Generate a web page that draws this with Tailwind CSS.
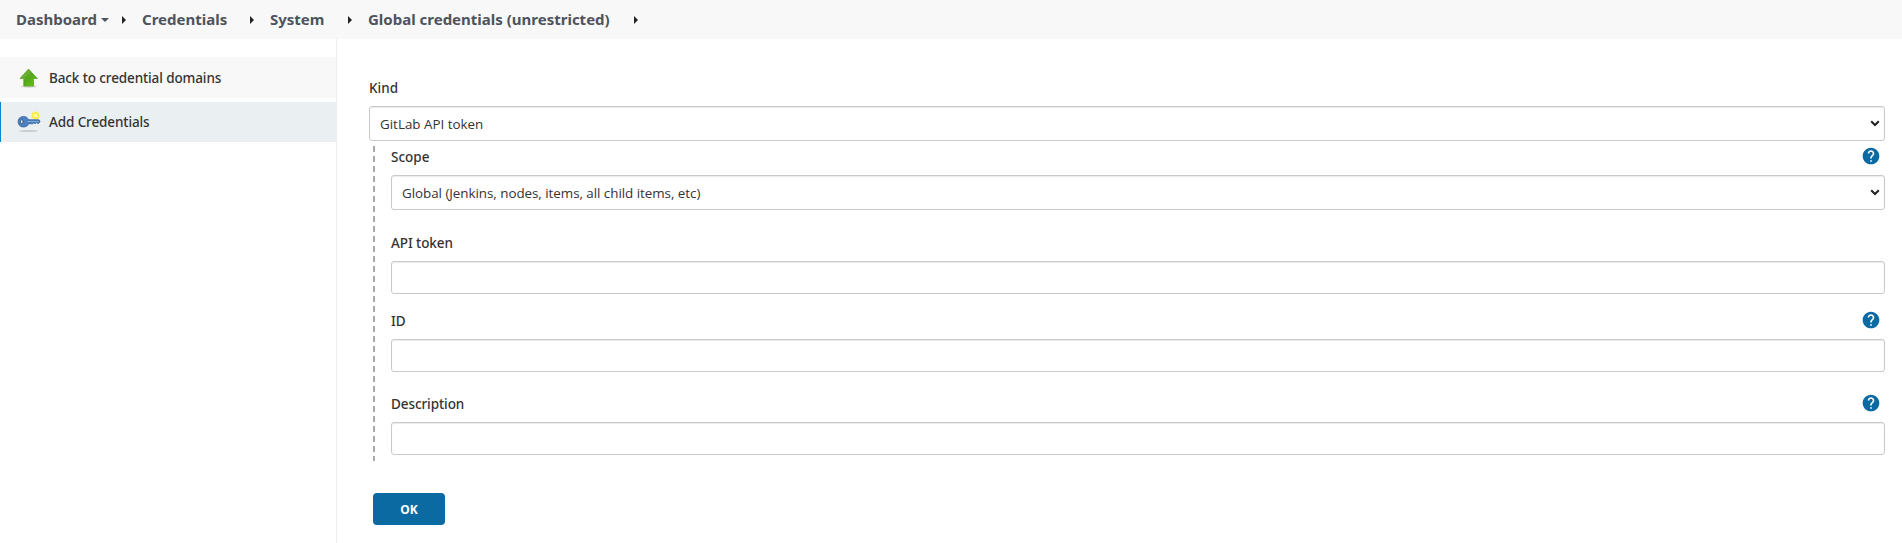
<!DOCTYPE html>
<html lang="en">
<head>
<meta charset="utf-8">
<title>Global credentials (unrestricted)</title>
<script src="https://cdn.jsdelivr.net/npm/@tailwindcss/browser@4"></script>
</head>
<body class="flex h-[543px] flex-col overflow-hidden bg-white font-['Noto_Sans',sans-serif] text-[#333]">
<svg class="hidden">
  <symbol id="caret" viewBox="0 0 4 8"><path d="M0 0L4 4L0 8Z" fill="#222"/></symbol>
  <symbol id="help" viewBox="0 0 24 24"><path fill="#0b6aa2" d="M12 2C6.48 2 2 6.48 2 12s4.480 10 10 10 10-4.480 10-10S17.520 2 12 2zm1 17h-2v-2h2v2zm2.070-7.750l-.9.920C13.450 12.900 13 13.500 13 15h-2v-.5c0-1.100.45-2.100 1.170-2.830l1.240-1.260c.37-.36.590-.86.590-1.410 0-1.100-.9-2-2-2s-2 .9-2 2H8c0-2.210 1.790-4 4-4s4 1.790 4 4c0 .88-.36 1.680-.93 2.250z"/></symbol>
  <symbol id="chevron" viewBox="0 0 10 7"><path d="M1.200 1.300L5 5L8.800 1.300" fill="none" stroke="#222" stroke-width="2"/></symbol>
</svg>

<header class="flex h-[39px] shrink-0 items-center whitespace-nowrap bg-[#f8f8f8] pl-4 text-[15px] leading-[38px] font-bold text-[#4d545d]">
  <a class="w-[85px] pb-px">Dashboard</a>
  <svg class="h-1 w-2" viewBox="0 0 8 4"><path d="M0 0H8L4 4Z" fill="#4d545d"/></svg>
  <svg class="ml-[13px] h-2 w-1"><use href="#caret"/></svg>
  <a class="ml-4 w-[108px] pb-px">Credentials</a>
  <svg class="h-2 w-1"><use href="#caret"/></svg>
  <a class="ml-4 w-[78px] pb-px">System</a>
  <svg class="h-2 w-1"><use href="#caret"/></svg>
  <a class="ml-4 w-[266px] pb-px">Global credentials (unrestricted)</a>
  <svg class="h-2 w-1"><use href="#caret"/></svg>
</header>

<div class="flex min-h-0 flex-1">
  <nav class="w-[337px] shrink-0 border-r border-[#eaeff2] pt-[18px] text-[13.5px] font-medium tracking-[-0.11px]">
    <a class="flex h-[41px] items-center bg-[#f8f8f8] pl-[17px]">
      <svg class="mr-2 h-6 w-6" viewBox="0 0 24 24">
        <defs><linearGradient id="g" x1="0" y1="0" x2="1" y2="1"><stop offset="0" stop-color="#8fbf5a"/><stop offset=".5" stop-color="#55a51c"/><stop offset="1" stop-color="#62cf0c"/></linearGradient></defs>
        <ellipse cx="12" cy="20.500" rx="8" ry="1.200" fill="#000" opacity=".16"/>
        <path d="M11.500 3L20.300 12.500H16.500V20H6.800V12.500H3Z" fill="url(#g)" stroke="#5d9e2c" stroke-width=".8" stroke-linejoin="round"/>
      </svg>
      <span class="pt-px">Back to credential domains</span>
    </a>
    <a class="mt-1 flex h-10 items-center border-l border-[#0b85d6] bg-[#eaeff2] pl-4">
      <svg class="mr-2 h-6 w-6" viewBox="0 0 24 24">
        <ellipse cx="11.500" cy="21" rx="9.500" ry="1.100" fill="#000" opacity=".14"/>
        <circle cx="18.500" cy="5.500" r="3.900" fill="#f8ee4e"/><circle cx="18.500" cy="5.500" r="1.700" fill="#fffbb0"/>
        <path d="M6.500 6.500C9 6.500 10.800 7.800 11.600 9.800H22L23 11.300L22 13.200H20.500L19.500 12.600L18.500 13.700L17 12.800L15.800 13.700H11.600C10.800 15.800 9 17 6.500 17C3.300 17 1.100 14.700 1.100 11.700S3.300 6.500 6.500 6.500Z" fill="#4c80be" stroke="#365f9c" stroke-width=".8"/>
        <path d="M10.500 11.500H21.500" stroke="#7fa9d8"/>
        <ellipse cx="4.700" cy="11.700" rx="1.300" ry="2" fill="#eaeff2" stroke="#315584" stroke-width=".9"/>
      </svg>
      Add Credentials
    </a>
  </nav>

  <main class="flex-1 pt-[39px] pr-[17px] pl-8">
    <div class="h-5 text-[13.5px] leading-5 font-medium">Kind</div>
    <div class="mt-2 flex h-[35px] items-center justify-between rounded-[3px] border border-[#c9c9c9] pr-1 pl-2.5 font-['Open_Sans',sans-serif] text-[13.4px] shadow-[inset_0_1px_1px_rgba(0,0,0,0.08)]">
      <span class="pt-0.5">GitLab API token</span><svg class="h-[7px] w-2.5"><use href="#chevron"/></svg>
    </div>

    <div class="mt-[5px] ml-1 flex h-[315px]">
      <div class="w-0.5 shrink-0 bg-[repeating-linear-gradient(to_bottom,#a9a9a9_0_6px,transparent_6px_10px)]"></div>
      <div class="flex-1 pt-px pl-4">
        <div class="flex h-5 justify-between pr-1 text-[13.5px] leading-5 font-medium">Scope<svg class="-mt-[1px] h-5 w-5"><use href="#help"/></svg></div>
        <div class="mt-2 flex h-[35px] items-center justify-between rounded-[3px] border border-[#c9c9c9] pr-1 pl-2.5 font-['Open_Sans',sans-serif] text-[13.4px] shadow-[inset_0_1px_1px_rgba(0,0,0,0.08)]">
          <span class="pt-0.5 tracking-[-0.04px]">Global (Jenkins, nodes, items, all child items, etc)</span><svg class="h-[7px] w-2.5"><use href="#chevron"/></svg>
        </div>

        <div class="mt-[23px] h-5 text-[13.5px] leading-5 font-medium tracking-[-0.08px]">API token</div>
        <div class="mt-2 h-[33px] rounded-[3px] border border-[#c9c9c9] shadow-[inset_0_1px_1px_rgba(0,0,0,0.08)]"></div>

        <div class="mt-[17px] flex h-5 justify-between pr-1 text-[13.5px] leading-5 font-medium">ID<svg class="-mt-[1px] h-5 w-5"><use href="#help"/></svg></div>
        <div class="mt-2 h-[33px] rounded-[3px] border border-[#c9c9c9] shadow-[inset_0_1px_1px_rgba(0,0,0,0.08)]"></div>

        <div class="mt-[22px] flex h-5 justify-between pr-1 text-[13.5px] leading-5 font-medium tracking-[-0.08px]">Description<svg class="-mt-[1px] h-5 w-5"><use href="#help"/></svg></div>
        <div class="mt-2 h-[33px] rounded-[3px] border border-[#c9c9c9] shadow-[inset_0_1px_1px_rgba(0,0,0,0.08)]"></div>
      </div>
    </div>

    <button class="mt-8 ml-1 h-8 w-[72px] rounded bg-[#0b6aa2] pt-px text-[12px] font-bold text-white">OK</button>
  </main>
</div>
</body>
</html>
